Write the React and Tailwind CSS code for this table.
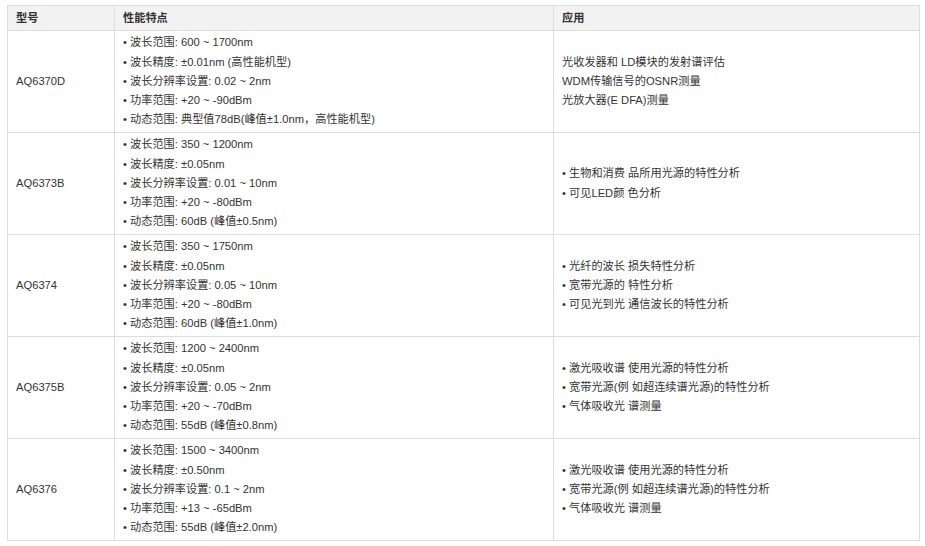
const rows = [
  {
    model: 'AQ6370D',
    specs: [
      '波长范围: 600 ~ 1700nm',
      '波长精度: ±0.01nm (高性能机型)',
      '波长分辨率设置: 0.02 ~ 2nm',
      '功率范围: +20 ~ -90dBm',
      '动态范围: 典型值78dB(峰值±1.0nm，高性能机型)',
    ],
    apps: ['光收发器和 LD模块的发射谱评估', 'WDM传输信号的OSNR测量', '光放大器(E DFA)测量'],
    bullet: false,
  },
  {
    model: 'AQ6373B',
    specs: [
      '波长范围: 350 ~ 1200nm',
      '波长精度: ±0.05nm',
      '波长分辨率设置: 0.01 ~ 10nm',
      '功率范围: +20 ~ -80dBm',
      '动态范围: 60dB (峰值±0.5nm)',
    ],
    apps: ['生物和消费 品所用光源的特性分析', '可见LED颜 色分析'],
    bullet: true,
  },
  {
    model: 'AQ6374',
    specs: [
      '波长范围: 350 ~ 1750nm',
      '波长精度: ±0.05nm',
      '波长分辨率设置: 0.05 ~ 10nm',
      '功率范围: +20 ~ -80dBm',
      '动态范围: 60dB (峰值±1.0nm)',
    ],
    apps: ['光纤的波长 损失特性分析', '宽带光源的 特性分析', '可见光到光 通信波长的特性分析'],
    bullet: true,
  },
  {
    model: 'AQ6375B',
    specs: [
      '波长范围: 1200 ~ 2400nm',
      '波长精度: ±0.05nm',
      '波长分辨率设置: 0.05 ~ 2nm',
      '功率范围: +20 ~ -70dBm',
      '动态范围: 55dB (峰值±0.8nm)',
    ],
    apps: ['激光吸收谱 使用光源的特性分析', '宽带光源(例 如超连续谱光源)的特性分析', '气体吸收光 谱测量'],
    bullet: true,
  },
  {
    model: 'AQ6376',
    specs: [
      '波长范围: 1500 ~ 3400nm',
      '波长精度: ±0.50nm',
      '波长分辨率设置: 0.1 ~ 2nm',
      '功率范围: +13 ~ -65dBm',
      '动态范围: 55dB (峰值±2.0nm)',
    ],
    apps: ['激光吸收谱 使用光源的特性分析', '宽带光源(例 如超连续谱光源)的特性分析', '气体吸收光 谱测量'],
    bullet: true,
  },
];

export default function App() {
  return (
    <div
      className="w-[925px] h-[546px] bg-white pt-[5px] pl-[7px] text-[11.2px] text-[#333]"
      style={{ fontFamily: '"Liberation Sans", Arial, "Noto Sans CJK SC", sans-serif' }}
    >
      <table className="w-[912px] border-collapse table-fixed">
        <colgroup>
          <col className="w-[107px]" />
          <col className="w-[439px]" />
          <col className="w-[366px]" />
        </colgroup>
        <thead>
          <tr className="bg-[#f2f2f2] h-[25px]">
            <th className="border border-[#ddd] px-2 text-left font-bold">型号</th>
            <th className="border border-[#ddd] px-2 text-left font-bold">性能特点</th>
            <th className="border border-[#ddd] px-2 text-left font-bold">应用</th>
          </tr>
        </thead>
        <tbody>
          {rows.map((r) => (
            <tr key={r.model} className="h-[102px]">
              <td className="border border-[#ddd] px-2 align-middle">{r.model}</td>
              <td className="border border-[#ddd] px-2 py-[2px] align-middle leading-[19.3px]">
                {r.specs.map((s) => (
                  <div key={s}>• {s}</div>
                ))}
              </td>
              <td className="border border-[#ddd] px-2 align-middle leading-[19.3px]">
                {r.apps.map((a) => (
                  <div key={a}>{r.bullet ? '• ' : ''}{a}</div>
                ))}
              </td>
            </tr>
          ))}
        </tbody>
      </table>
    </div>
  );
}
